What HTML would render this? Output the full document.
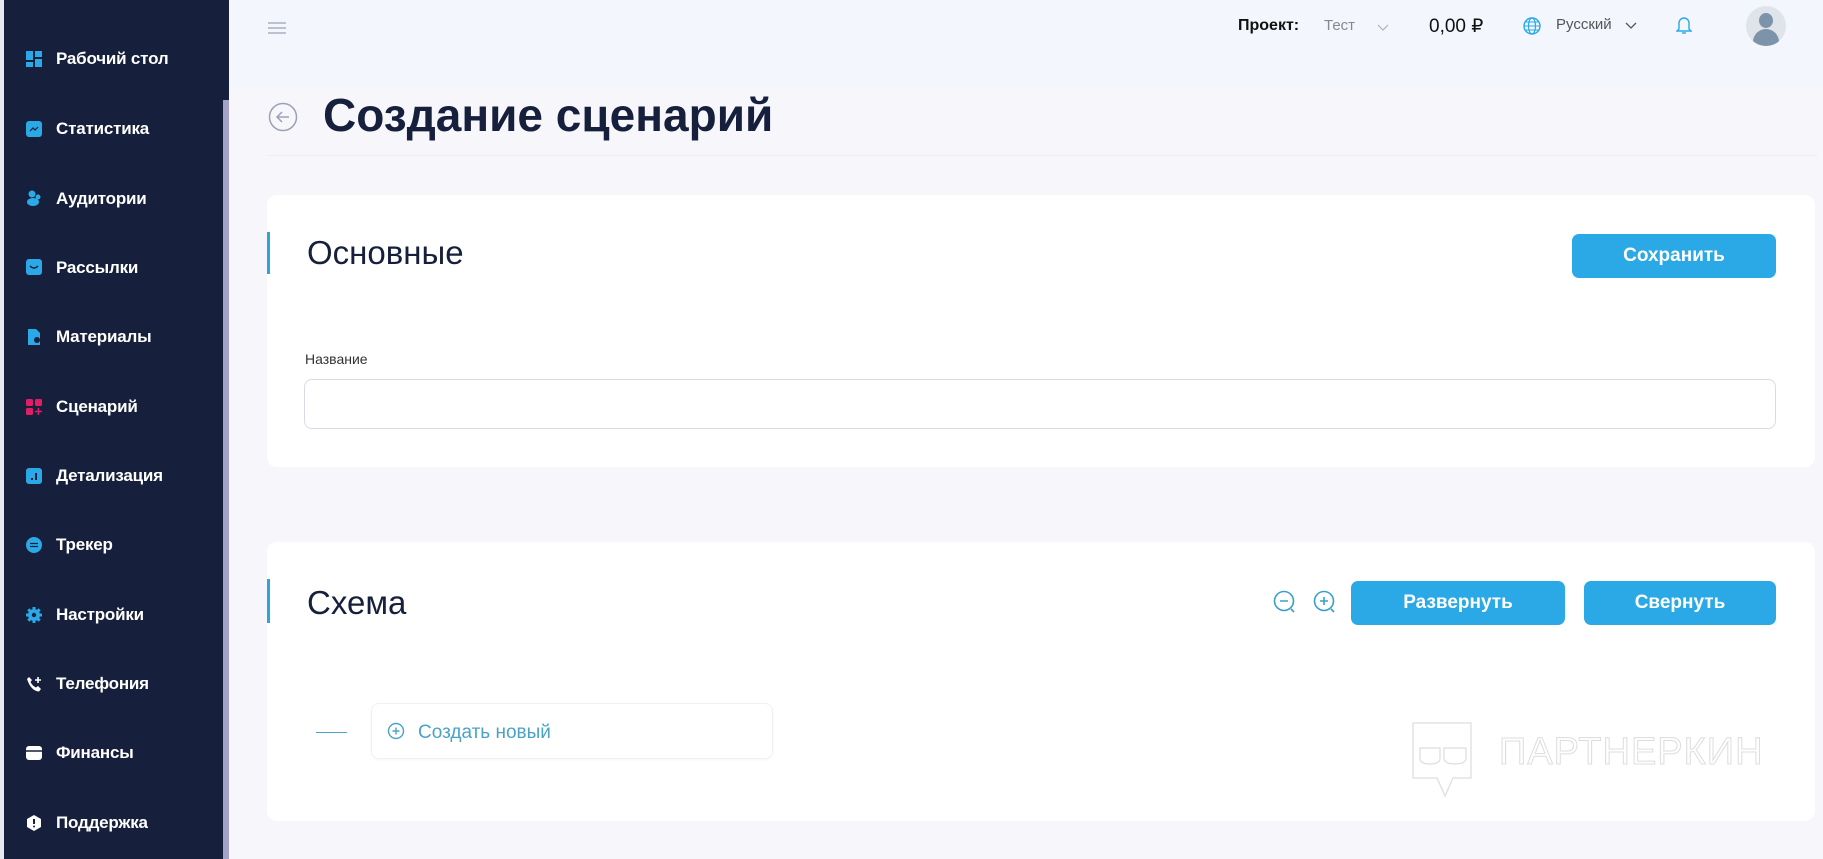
<!DOCTYPE html>
<html><head><meta charset="utf-8"><style>
*{margin:0;padding:0;box-sizing:border-box}
body{width:1823px;height:859px;overflow:hidden;background:#f7f7fb;font-family:"Liberation Sans","DejaVu Sans",sans-serif;position:relative}
.sb{position:absolute;left:0;top:0;width:229px;height:859px;background:#161f3b;border-left:4px solid #e8e9f0}
.sbar{position:absolute;left:223px;top:100px;width:6px;height:759px;background:#a4a2c6}
.it{position:absolute;left:52px;color:#fff;font-size:17px;font-weight:600;letter-spacing:-0.2px}
.ic{position:absolute;left:22px;width:16px;height:16px}
.hdr{position:absolute;left:229px;top:0;right:0;height:88px;background:#f3f6fc}
.t{position:absolute;white-space:nowrap}
.card{position:absolute;left:267px;width:1548px;background:#fff;border-radius:10px}
.bar{position:absolute;left:0;width:3px;background:#2ba6d5}
.btn{position:absolute;background:#2aa9e6;color:#fff;border-radius:7px;font-size:19px;display:flex;align-items:center;justify-content:center;font-weight:600}
</style></head><body>
<div class="sb">
 <svg class="ic" style="top:51px" viewBox="0 0 16 16"><rect x="0" y="0" width="7" height="9" fill="#2aa9e6"/><rect x="9" y="0" width="7" height="6" fill="#2aa9e6"/><rect x="0" y="11" width="7" height="5" fill="#2aa9e6"/><rect x="9" y="8" width="7" height="8" fill="#2aa9e6"/></svg>
 <div class="it" style="top:49px">Рабочий стол</div>
 <svg class="ic" style="top:121px" viewBox="0 0 16 16"><rect width="16" height="16" rx="3" fill="#2aa9e6"/><path d="M4 10l3-3 2 2 3-3" stroke="#161f3b" fill="none" stroke-width="1.2"/></svg>
 <div class="it" style="top:119px">Статистика</div>
 <svg class="ic" style="top:190px" viewBox="0 0 16 16"><circle cx="6" cy="4" r="3.5" fill="#2aa9e6"/><ellipse cx="7" cy="12" rx="6" ry="4" fill="#2aa9e6"/><circle cx="12" cy="7" r="2.5" fill="#2aa9e6"/></svg>
 <div class="it" style="top:189px">Аудитории</div>
 <svg class="ic" style="top:259px" viewBox="0 0 16 16"><rect width="16" height="16" rx="3" fill="#2aa9e6"/><path d="M4 7q4 4 8 0" stroke="#161f3b" fill="none" stroke-width="1.3"/></svg>
 <div class="it" style="top:258px">Рассылки</div>
 <svg class="ic" style="top:329px" viewBox="0 0 16 16"><path d="M2 0h8l4 4v12H2z" fill="#2aa9e6"/><circle cx="11" cy="11" r="3" fill="#161f3b"/></svg>
 <div class="it" style="top:327px">Материалы</div>
 <svg class="ic" style="top:399px" viewBox="0 0 16 16"><rect width="7" height="7" rx="1.5" fill="#e11d63"/><rect x="9" width="7" height="7" rx="1.5" fill="#e11d63"/><rect y="9" width="7" height="7" rx="1.5" fill="#e11d63"/><path d="M12.5 9v7M9 12.5h7" stroke="#e11d63" stroke-width="1.6"/></svg>
 <div class="it" style="top:397px">Сценарий</div>
 <svg class="ic" style="top:468px" viewBox="0 0 16 16"><rect width="16" height="16" rx="3" fill="#2aa9e6"/><path d="M6 12v-2M10 12V5" stroke="#161f3b" stroke-width="2"/></svg>
 <div class="it" style="top:466px">Детализация</div>
 <svg class="ic" style="top:537px" viewBox="0 0 16 16"><circle cx="8" cy="8" r="8" fill="#2aa9e6"/><path d="M4 6.5h8M4 9.5h8" stroke="#161f3b" stroke-width="1.3"/></svg>
 <div class="it" style="top:535px">Трекер</div>
 <svg class="ic" style="top:607px" viewBox="0 0 16 16"><circle cx="8" cy="8" r="6" fill="#2aa9e6"/><path d="M8 0v16M0 8h16M2.3 2.3l11.4 11.4M13.7 2.3L2.3 13.7" stroke="#2aa9e6" stroke-width="3"/><circle cx="8" cy="8" r="2.2" fill="#161f3b"/></svg>
 <div class="it" style="top:605px">Настройки</div>
 <svg class="ic" style="top:676px" viewBox="0 0 16 16"><path d="M3 1l3 3-1.5 2q2 4 5.5 5.5l2-1.5 3 3-2 2.5Q5 15 1 3z" fill="#fff"/><path d="M12 1v6M9 4h6" stroke="#fff" stroke-width="1.6"/></svg>
 <div class="it" style="top:674px">Телефония</div>
 <svg class="ic" style="top:745px" viewBox="0 0 16 16"><rect y="1" width="16" height="14" rx="3" fill="#fff"/><path d="M0 6h16" stroke="#161f3b" stroke-width="1.5"/></svg>
 <div class="it" style="top:743px">Финансы</div>
 <svg class="ic" style="top:815px" viewBox="0 0 16 16"><path d="M8 0l7 4v8l-7 4-7-4V4z" fill="#fff"/><path d="M8 4v5" stroke="#161f3b" stroke-width="2"/><circle cx="8" cy="11.5" r="1" fill="#161f3b"/></svg>
 <div class="it" style="top:813px">Поддержка</div>
</div>
<div class="sbar"></div>
<div class="hdr"></div>
<svg style="position:absolute;left:268px;top:22px" width="18" height="12" viewBox="0 0 18 12"><path d="M0 1h18M0 6h18M0 11h18" stroke="#9aa0b4" stroke-width="1.3"/></svg>
<div class="t" style="left:1238px;top:17px;font-size:16px;font-weight:600;color:#111">Проект:</div>
<div class="t" style="left:1324px;top:17px;font-size:15px;color:#888">Тест</div>
<svg style="position:absolute;left:1377px;top:24px" width="12" height="8"><path d="M1 1l5 5 5-5" stroke="#aaa" fill="none"/></svg>
<div class="t" style="left:1429px;top:15px;font-size:19px;color:#111">0,00 ₽</div>
<svg style="position:absolute;left:1523px;top:17px" width="18" height="18" viewBox="0 0 18 18"><circle cx="9" cy="9" r="8" stroke="#2aa9e6" fill="none" stroke-width="1.4"/><ellipse cx="9" cy="9" rx="3.5" ry="8" stroke="#2aa9e6" fill="none" stroke-width="1.2"/><path d="M1 9h16M2.5 5h13M2.5 13h13" stroke="#2aa9e6" stroke-width="1.1"/></svg>
<div class="t" style="left:1556px;top:16px;font-size:15px;color:#555">Русский</div>
<svg style="position:absolute;left:1625px;top:22px" width="12" height="8"><path d="M1 1l5 5 5-5" stroke="#555" fill="none" stroke-width="1.3"/></svg>
<svg style="position:absolute;left:1676px;top:15px" width="16" height="20" viewBox="0 0 16 20"><path d="M3 14V8a5 5 0 0110 0v6l2 2H1z" stroke="#2aa9e6" fill="none" stroke-width="1.4"/><path d="M6 18h4" stroke="#2aa9e6" stroke-width="1.4"/></svg>
<div style="position:absolute;left:1746px;top:6px;width:40px;height:40px;border-radius:50%;background:#dfe3ea;overflow:hidden"><div style="position:absolute;left:13px;top:7px;width:14px;height:15px;border-radius:50%;background:#7d93aa"></div><div style="position:absolute;left:7px;top:23px;width:26px;height:22px;border-radius:13px 13px 0 0;background:#7d93aa"></div></div>
<svg style="position:absolute;left:268px;top:102px" width="30" height="30" viewBox="0 0 30 30"><circle cx="15" cy="15" r="13.5" stroke="#9aa0b8" fill="none" stroke-width="1.5"/><path d="M21 15H9M14 10l-5 5 5 5" stroke="#9aa0b8" fill="none" stroke-width="1.5"/></svg>
<div class="t" style="left:323px;top:88px;font-size:46px;font-weight:700;color:#161f3b">Создание сценарий</div>
<div style="position:absolute;left:267px;top:155px;width:1550px;height:1px;background:#eceef3"></div>
<div class="card" style="top:195px;height:272px">
 <div class="bar" style="top:37px;height:42px"></div>
 <div class="t" style="left:40px;top:39px;font-size:33px;color:#161f3b">Основные</div>
 <div class="btn" style="left:1305px;top:39px;width:204px;height:44px">Сохранить</div>
 <div class="t" style="left:38px;top:156px;font-size:14px;color:#333">Название</div>
 <div style="position:absolute;left:37px;top:184px;width:1472px;height:50px;border:1px solid #d8dbe6;border-radius:8px"></div>
</div>
<div class="card" style="top:542px;height:279px">
 <div class="bar" style="top:37px;height:44px"></div>
 <div class="t" style="left:40px;top:42px;font-size:33px;color:#161f3b">Схема</div>
 <svg style="position:absolute;left:1006px;top:48px" width="26" height="26" viewBox="0 0 26 26"><circle cx="11" cy="11" r="9.5" stroke="#3a9fc8" fill="none" stroke-width="1.6"/><path d="M7 11h8M18 19l3 3" stroke="#3a9fc8" stroke-width="1.6"/></svg>
 <svg style="position:absolute;left:1046px;top:48px" width="26" height="26" viewBox="0 0 26 26"><circle cx="11" cy="11" r="9.5" stroke="#3a9fc8" fill="none" stroke-width="1.6"/><path d="M7 11h8M11 7v8M18 19l3 3" stroke="#3a9fc8" stroke-width="1.6"/></svg>
 <div class="btn" style="left:1084px;top:39px;width:214px;height:44px">Развернуть</div>
 <div class="btn" style="left:1317px;top:39px;width:192px;height:44px">Свернуть</div>
 <div style="position:absolute;left:49px;top:190px;width:31px;height:1px;background:#4aa3c6"></div>
 <div style="position:absolute;left:104px;top:161px;width:402px;height:56px;border:1px solid #f0f1f5;border-radius:8px;box-shadow:0 1px 3px rgba(0,0,0,.04)"></div>
 <svg style="position:absolute;left:120px;top:180px" width="18" height="18" viewBox="0 0 18 18"><circle cx="9" cy="9" r="7.5" stroke="#4aa3c6" fill="none" stroke-width="1.4"/><path d="M5.5 9h7M9 5.5v7" stroke="#4aa3c6" stroke-width="1.4"/></svg>
 <div class="t" style="left:151px;top:180px;font-size:19px;color:#4aa3c6">Создать новый</div>
 <svg style="position:absolute;left:1143px;top:178px" width="70" height="78" viewBox="0 0 70 78"><path d="M3 3h58v55H43l-8 18-8-18H3z" stroke="#ddd" fill="none" stroke-width="1.2"/><path d="M10 28h20v10q0 6-10 6t-10-6zM34 28h22v10q0 6-11 6t-11-6z" stroke="#ddd" fill="none" stroke-width="1.2"/></svg>
 <div class="t" style="left:1232px;top:189px;font-size:38px;color:#fff;-webkit-text-stroke:1px #ddd;letter-spacing:1px">ПАРТНЕРКИН</div>
</div>
</body></html>
